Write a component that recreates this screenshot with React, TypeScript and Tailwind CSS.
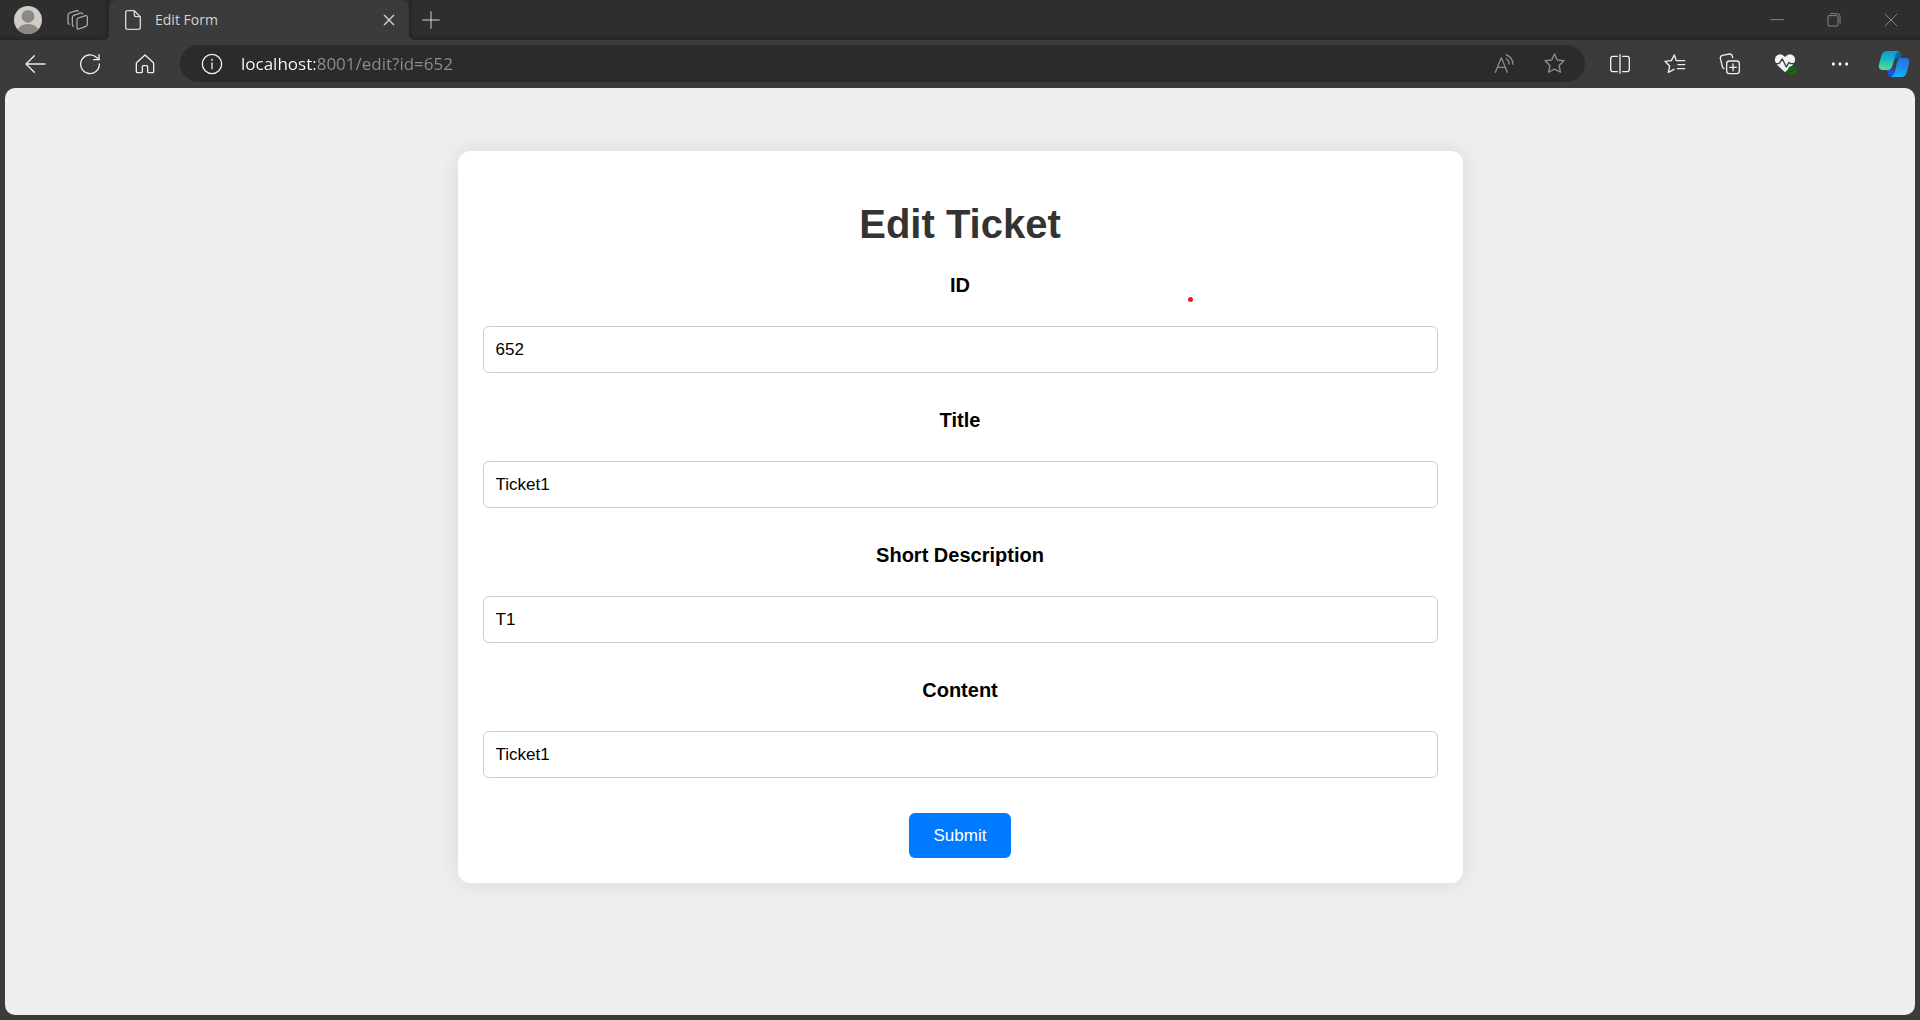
import { useState, type ReactNode } from "react";

type IconProps = { viewBox: string; className: string; children: ReactNode };

function Icon({ viewBox, className, children }: IconProps) {
  return (
    <svg
      viewBox={viewBox}
      className={className}
      fill="none"
      stroke="currentColor"
      strokeWidth="4"
      strokeLinecap="round"
      strokeLinejoin="round"
      aria-hidden="true"
    >
      {children}
    </svg>
  );
}

function AvatarIcon() {
  return (
    <svg viewBox="0 0 84 84" className="size-7" aria-hidden="true">
      <clipPath id="avatar-clip">
        <circle cx="42" cy="42" r="42" />
      </clipPath>
      <g clipPath="url(#avatar-clip)">
        <rect width="84" height="84" fill="#d0cdc8" />
        <circle cx="42" cy="31" r="19" fill="#8d8884" />
        <ellipse cx="42" cy="74" rx="31" ry="20" fill="#8d8884" />
      </g>
    </svg>
  );
}

function WorkspacesIcon() {
  return (
    <Icon viewBox="0 0 72 72" className="size-6 text-[#b4b4b4]">
      <path d="M37 30 L59 23 Q64 22 64 27 V49 Q64 53 60 55 L38 63 Q33 65 33 60 V36 Q33 32 37 30 Z" strokeWidth="3.5" />
      <path d="M23 54 Q19 55 19 50 V29 Q19 24 23 22 L44 15 Q49 14 50 18" strokeWidth="3.5" />
      <path d="M10 48 Q6 49 6 44 V22 Q6 17 10 15 L31 8 Q36 7 37 10" strokeWidth="3.5" />
    </Icon>
  );
}

function CopilotIcon() {
  return (
    <svg viewBox="0 0 96 84" className="h-7 w-8" aria-hidden="true">
      <defs>
        <linearGradient id="cp-a" x1="0.4" y1="0" x2="0.3" y2="1">
          <stop offset="0" stopColor="#1597d9" />
          <stop offset="0.45" stopColor="#17b7c4" />
          <stop offset="1" stopColor="#5fe08a" />
        </linearGradient>
        <linearGradient id="cp-b" x1="0.6" y1="0" x2="0.4" y2="1">
          <stop offset="0" stopColor="#2f6fdf" />
          <stop offset="0.5" stopColor="#1d8df2" />
          <stop offset="1" stopColor="#12b4fb" />
        </linearGradient>
        <linearGradient id="cp-c" x1="0" y1="0" x2="1" y2="1">
          <stop offset="0" stopColor="#0b7fb5" />
          <stop offset="1" stopColor="#0a4c80" />
        </linearGradient>
      </defs>
      <path d="M48 3 H57 Q66 3 69 13 L72 25 H60 Q52 25 49 33 L44 44 Z" fill="url(#cp-c)" />
      <path d="M25 58 H38 L46 52 L50 81 H41 Q33 81 30 72 Z" fill="#1f4fe0" />
      <path d="M27 3 H62 Q54 6 51 17 L44 45 Q40 60 28 60 H13 Q0 60 3 43 L11 15 Q15 3 27 3 Z" fill="url(#cp-a)" />
      <path d="M68 24 H82 Q96 24 93 41 L86 68 Q82 81 70 81 H39 Q47 78 50 67 L57 37 Q60 24 68 24 Z" fill="url(#cp-b)" />
    </svg>
  );
}

const starPath =
  "M30 3 L38 20 L57 22 L43 36 L47 55 L30 46 L13 55 L17 36 L3 22 L22 20 Z";

type ToolButtonProps = { label: string; className?: string; children: ReactNode };

function ToolButton({ label, className = "w-[55px]", children }: ToolButtonProps) {
  return (
    <button type="button" aria-label={label} className={`flex h-10 shrink-0 items-center justify-center ${className}`}>
      {children}
    </button>
  );
}

function TabStrip() {
  return (
    <div className="flex h-10 bg-[#3b3b3b]">
      <div className="flex w-[109px] shrink-0 items-center rounded-br-md bg-[#2e2e2e] shadow-[inset_-2px_-2px_3px_#262626]">
        <ToolButton label="Profile" className="w-14">
          <AvatarIcon />
        </ToolButton>
        <ToolButton label="Workspaces" className="w-11">
          <WorkspacesIcon />
        </ToolButton>
      </div>
      <div className="w-[300px] shrink-0 bg-[#2e2e2e]">
        <div className="flex h-full items-center rounded-t-lg bg-[#3b3b3b] pr-2 pl-4">
          <Icon viewBox="0 0 48 60" className="h-5 w-4 text-[#d6d6d6]">
            <path d="M8 2 H28 L46 20 V52 Q46 58 40 58 H8 Q2 58 2 52 V8 Q2 2 8 2 Z" />
            <path d="M28 2 V14 Q28 20 34 20 H46" />
          </Icon>
          <span className="ml-[14px] grow font-['Open_Sans','Noto_Sans',sans-serif] text-[14px] leading-5 text-[#d2d2d2]">Edit Form</span>
          <ToolButton label="Close tab" className="w-6">
            <Icon viewBox="0 0 36 36" className="size-3 text-[#d2d2d2]">
              <path d="M4 4 L32 32 M32 4 L4 32" />
            </Icon>
          </ToolButton>
        </div>
      </div>
      <div className="flex grow items-center rounded-bl-md bg-[#2e2e2e] shadow-[inset_2px_-2px_3px_#262626]">
        <ToolButton label="New tab" className="w-11">
          <Icon viewBox="0 0 54 54" className="size-[18px] text-[#d2d2d2]">
            <path d="M27 2 V52 M2 27 H52" strokeWidth="3" />
          </Icon>
        </ToolButton>
        <div className="grow" />
        <ToolButton label="Minimize" className="w-[57px]">
          <Icon viewBox="0 0 42 42" className="size-[14px] text-[#858585]">
            <path d="M2 20 H40" strokeWidth="3" />
          </Icon>
        </ToolButton>
        <ToolButton label="Restore" className="w-[57px]">
          <Icon viewBox="0 0 42 42" className="size-[14px] text-[#858585]">
            <rect x="3" y="8" width="30" height="31" rx="3" strokeWidth="3" />
            <path d="M11 2 H32 Q39 2 39 9 V30" strokeWidth="3" />
          </Icon>
        </ToolButton>
        <ToolButton label="Close window" className="w-[58px]">
          <Icon viewBox="0 0 42 42" className="size-[14px] text-[#858585]">
            <path d="M3 3 L39 39 M39 3 L3 39" strokeWidth="3" />
          </Icon>
        </ToolButton>
      </div>
    </div>
  );
}

function Toolbar() {
  const [url, setUrl] = useState("localhost:8001/edit?id=652");
  return (
    <div className="flex h-12 items-center bg-[#3b3b3b] pb-px pl-[7px] text-[#eeeeee]">
      <ToolButton label="Back">
        <Icon viewBox="0 0 66 60" className="h-5 w-[22px]">
          <path d="M31 5 L6 30 L31 55 M6 30 H63" />
        </Icon>
      </ToolButton>
      <ToolButton label="Refresh">
        <Icon viewBox="0 0 66 66" className="size-[22px]">
          <path d="M61 33 A28 28 0 1 1 52 13 L60 20" />
          <path d="M60 5 V20 H44" />
        </Icon>
      </ToolButton>
      <ToolButton label="Home">
        <Icon viewBox="0 0 60 60" className="size-5">
          <path d="M30 3 L54 25 Q56 27 56 30 V53 Q56 56 53 56 H41 Q38 56 38 53 V38 Q38 35 35 35 H25 Q22 35 22 38 V53 Q22 56 19 56 H7 Q4 56 4 53 V30 Q4 27 6 25 Z" />
        </Icon>
      </ToolButton>
      <div className="mr-[7px] ml-2 flex h-[37px] min-w-0 grow items-center rounded-full bg-[#2b2b2b] pr-[6px] pl-2">
        <ToolButton label="Site information" className="w-12">
          <Icon viewBox="0 0 66 66" className="size-[22px]">
            <circle cx="33" cy="33" r="29" />
            <path d="M33 30 V47" />
            <circle cx="33" cy="20" r="1" />
          </Icon>
        </ToolButton>
        <input
          type="text"
          aria-label="Address"
          value={url}
          onChange={(e) => setUrl(e.target.value)}
          className="ml-[5px] h-7 min-w-0 grow bg-linear-to-r from-white from-[74px] to-[#8e8e8e] to-[74px] bg-clip-text pb-px font-['Open_Sans','Noto_Sans',sans-serif] text-[17px] leading-6 text-transparent outline-none"
        />
        <div className="flex text-[#8c8c8c]">
          <ToolButton label="Read aloud" className="w-[50px]">
            <Icon viewBox="0 0 60 60" className="size-5">
              <path d="M4 55 L22 11 L40 55 M10 40 H34" />
              <path d="M37 14 Q45 20 46 30" />
              <path d="M37 3 Q56 10 57 31" />
            </Icon>
          </ToolButton>
          <ToolButton label="Add to favorites" className="w-[50px]">
            <Icon viewBox="0 0 60 60" className="size-[21px]">
              <path d={starPath} />
            </Icon>
          </ToolButton>
        </div>
      </div>
      <ToolButton label="Split screen">
        <Icon viewBox="0 0 60 60" className="size-5">
          <path d="M22 7 H9 Q2 7 2 14 V46 Q2 53 9 53 H22 M38 7 H51 Q58 7 58 14 V46 Q58 53 51 53 H38 M30 2 V58" />
        </Icon>
      </ToolButton>
      <ToolButton label="Favorites">
        <Icon viewBox="0 0 66 60" className="h-5 w-[22px]">
          <path d="M37 20 L31 3 L22 20 L3 22 L17 36 L13 55 L30 46" />
          <path d="M40 20 H62 M42 32 H62 M40 44 H62" />
        </Icon>
      </ToolButton>
      <ToolButton label="Collections">
        <Icon viewBox="0 0 66 66" className="size-[22px]">
          <rect x="23" y="24" width="38" height="38" rx="8" />
          <path d="M42 33 V53 M32 43 H52" />
          <path d="M15 47 Q11 45 10 40 L4 16 Q3 9 10 7 L31 3 Q38 2 40 9 L41 14" />
        </Icon>
      </ToolButton>
      <ToolButton label="Browser essentials">
        <Icon viewBox="0 0 66 66" className="size-[22px]">
          <path d="M33 12 Q24 1 12 5 Q1 11 3 24 Q6 34 15 41 L33 58 L51 41 Q60 34 63 24 Q65 11 54 5 Q42 1 33 12 Z" fill="#f2f2f2" stroke="none" />
          <path d="M0 32 H15 L25 18 L37 42 L45 28 L50 32 H66" stroke="#3b3b3b" />
          <circle cx="54" cy="52" r="13" fill="#0e700e" stroke="none" />
          <path d="M48 53 L52 57 L60 48" stroke="#0a4a0a" strokeWidth="3" />
        </Icon>
      </ToolButton>
      <ToolButton label="Settings and more">
        <Icon viewBox="0 0 54 54" className="size-[18px]">
          <g fill="currentColor" stroke="none">
            <circle cx="7" cy="27" r="5" />
            <circle cx="27" cy="27" r="5" />
            <circle cx="47" cy="27" r="5" />
          </g>
        </Icon>
      </ToolButton>
      <ToolButton label="Copilot" className="w-[53px]">
        <CopilotIcon />
      </ToolButton>
    </div>
  );
}

const fields = [
  { name: "id", label: "ID", value: "652" },
  { name: "title", label: "Title", value: "Ticket1" },
  { name: "short-description", label: "Short Description", value: "T1" },
  { name: "content", label: "Content", value: "Ticket1" },
];

function TicketForm() {
  return (
    <form
      onSubmit={(e) => e.preventDefault()}
      className="relative flex w-full max-w-[1005px] flex-col items-center rounded-xl bg-white px-[25px] pt-[50px] pb-[25px] text-black shadow-[0_0_25px_rgba(0,0,0,0.1)]"
    >
      <h1 className="mb-[26px] text-[40px] leading-[46px] font-bold text-[#333333]">Edit Ticket</h1>
      <div className="flex w-full flex-col gap-[35px]">
        {fields.map((field) => (
          <div key={field.name} className="flex flex-col items-center gap-[29px]">
            <label htmlFor={field.name} className="text-[20px] leading-6 font-bold">
              {field.label}
            </label>
            <input
              id={field.name}
              type="text"
              defaultValue={field.value}
              className="h-[47px] w-full rounded-md border border-[#cccccc] px-3 text-[17px] leading-5"
            />
          </div>
        ))}
      </div>
      <button type="submit" className="mt-[35px] h-[45px] rounded-md bg-[#007bff] px-[25px] text-[17px] leading-5 text-white">
        Submit
      </button>
      <span className="absolute top-[146px] right-[270px] size-[5px] rounded-full bg-[#e81c1c]" />
    </form>
  );
}

export default function App() {
  return (
    <div className="flex min-h-screen flex-col bg-[#3b3b3b]">
      <header>
        <TabStrip />
        <Toolbar />
      </header>
      <main className="mx-[5px] mb-[5px] flex grow flex-col items-center rounded-[10px] bg-[#efefef] pt-[63px] pb-16 font-['Liberation_Sans',Arial,sans-serif]">
        <TicketForm />
      </main>
    </div>
  );
}
